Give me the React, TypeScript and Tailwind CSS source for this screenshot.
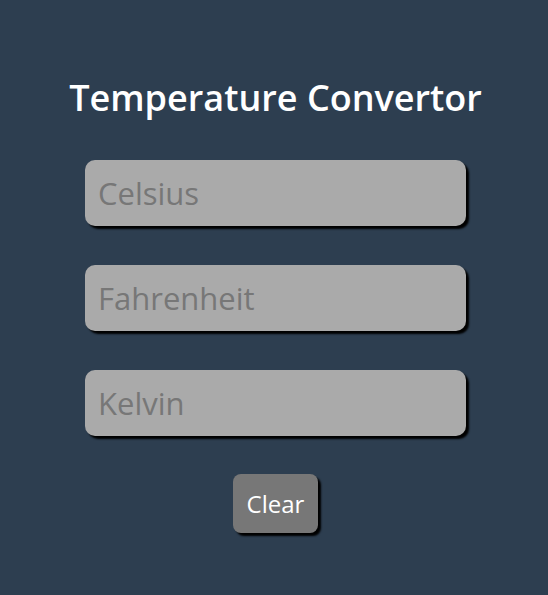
import React from "react";

export default function App() {
  const inputCls =
    "w-[381px] h-[66px] rounded-[10px] bg-[#aaaaaa] pl-[13px] text-[31px] text-[#333] placeholder:text-[#777777] outline-none shadow-[3px_3px_2px_#000]";
  return (
    <div
      className="min-h-[595px] w-full bg-[#2d3e50] flex flex-col items-center pl-[3px]"
      style={{ fontFamily: '"Open Sans", sans-serif' }}
    >
      <h1 className="mt-[73px] text-[36px] font-semibold text-white leading-[50px]">
        Temperature Convertor
      </h1>
      <div className="mt-[37px] flex flex-col gap-[39px]">
        <input className={inputCls} placeholder="Celsius" />
        <input className={inputCls} placeholder="Fahrenheit" />
        <input className={inputCls} placeholder="Kelvin" />
      </div>
      <button className="mt-[38px] w-[85px] h-[59px] rounded-[8px] bg-[#777777] text-white text-[24px] shadow-[3px_3px_2px_#000]">
        Clear
      </button>
    </div>
  );
}
